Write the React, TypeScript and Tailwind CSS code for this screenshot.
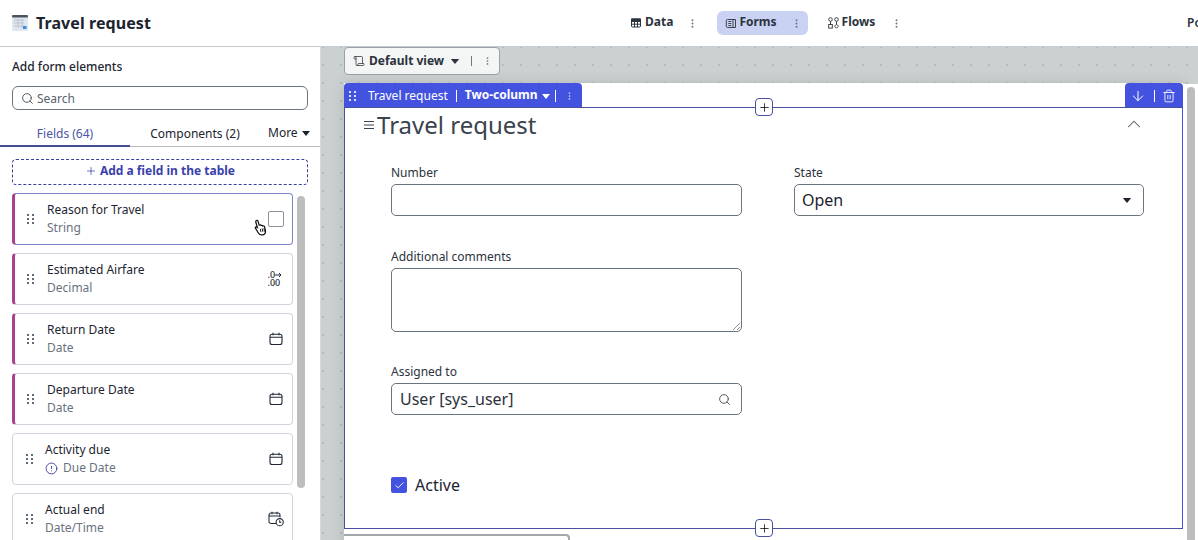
import React from "react";
import { Search, ChevronUp, ArrowDown, Trash2, Plus, Check, CircleAlert, Scroll } from "lucide-react";

const font = { fontFamily: '"Noto Sans", sans-serif' };

function Caret({ className = "" }: { className?: string }) {
  return <svg viewBox="0 0 10 6" className={className}><path d="M0 0h10L5 6z" fill="currentColor" /></svg>;
}

function Grip({ className = "" }: { className?: string }) {
  return (
    <svg viewBox="0 0 7 11" className={className} fill="currentColor">
      {[0, 4, 8].map((y) => (
        <g key={y}>
          <rect x="0" y={y} width="2" height="2" />
          <rect x="5" y={y} width="2" height="2" />
        </g>
      ))}
    </svg>
  );
}

function Kebab({ className = "" }: { className?: string }) {
  return (
    <svg viewBox="0 0 3 11" className={className} fill="currentColor">
      <circle cx="1.5" cy="1.5" r="1.2" />
      <circle cx="1.5" cy="5.5" r="1.2" />
      <circle cx="1.5" cy="9.5" r="1.2" />
    </svg>
  );
}

function TableLogo() {
  return (
    <svg viewBox="0 0 16 16" className="w-4 h-4">
      <rect x="0" y="0" width="16" height="16" rx="1.5" fill="#dfe6ee" />
      <rect x="0" y="0" width="16" height="2.500" rx="1" fill="#4a5560" />
      <path d="M2 5h10M2 8h10M2 11h10M6 4v9M10 4v9" stroke="#b3bec9" strokeWidth="0.8" />
      <rect x="11" y="11" width="3.500" height="3" fill="#3f8ee8" />
    </svg>
  );
}

function DataGlyph() {
  return (
    <svg viewBox="0 0 10 10" className="w-[10px] h-[10px]" fill="none" stroke="currentColor" strokeWidth="1">
      <rect x="0.500" y="1" width="9" height="8" rx="1" />
      <rect x="0.500" y="1" width="9" height="2.500" fill="currentColor" />
      <path d="M0.500 6.200h9M3.500 3.500v5.500M6.500 3.500v5.500" />
    </svg>
  );
}

function FormsGlyph() {
  return (
    <svg viewBox="0 0 11 11" className="w-[11px] h-[11px]" fill="none" stroke="currentColor" strokeWidth="0.9">
      <path d="M2.500 1.500H8v8H2.500a1.200 1.200 0 0 1-1.200-1.200V2.700A1.200 1.200 0 0 1 2.500 1.500z" />
      <path d="M8 1.500h2.500v8H8M3.300 3.500h3M3.300 5.500h3M3.300 7.500h3" />
    </svg>
  );
}

function FlowsGlyph() {
  return (
    <svg viewBox="0 0 11 12" className="w-[11px] h-[12px]" fill="none" stroke="currentColor" strokeWidth="0.9">
      <circle cx="2.500" cy="2.500" r="1.800" />
      <circle cx="8.500" cy="2.500" r="1.800" />
      <rect x="0.700" y="7.500" width="3.600" height="3.600" />
      <path d="M8.500 7.200l2 2-2 2-2-2z" />
      <path d="M2.500 4.500v3M8.500 4.500v2.700" />
    </svg>
  );
}

function DecimalIcon() {
  return (
    <div className="flex flex-col items-start text-[9px] leading-[8px] text-[#1f2937] w-[16px] font-medium whitespace-nowrap">
      <div className="flex items-center h-[8px]">
        <span>.0</span>
        <svg viewBox="0 0 7 6" className="w-[7px] h-[6px] shrink-0"><path d="M0 3h6M4 1l2 2-2 2" stroke="currentColor" fill="none" strokeWidth="1" /></svg>
      </div>
      <span>.00</span>
    </div>
  );
}

function CalendarGlyph() {
  return (
    <svg viewBox="0 0 14 14" className="w-[14px] h-[14px]" fill="none" stroke="#1f2937" strokeWidth="1.100">
      <rect x="1" y="2.200" width="12" height="10.300" rx="2" />
      <path d="M1 5.200h12M4 .8v2.400M10 .8v2.400" />
    </svg>
  );
}

function CalendarClockGlyph() {
  return (
    <svg viewBox="0 0 16 16" className="w-4 h-4" fill="none" stroke="#1f2937" strokeWidth="1.050">
      <path d="M8 12.500H3a2 2 0 0 1-2-2V4a2 2 0 0 1 2-2h7a2 2 0 0 1 2 2v2.500M1 5h11M4 .8v2.400M9 .8v2.400" />
      <circle cx="11.700" cy="11.200" r="3.600" />
      <path d="M11.700 9.300v2h1.600" />
    </svg>
  );
}

function Hand() {
  return (
    <svg viewBox="0 0 16 18" className="absolute left-[238px] top-[24px] w-[15px] h-[19px]">
      <path d="M3.200 1.800c.9-.8 1.900-.3 2.200.7l1.200 4 .3-.2c.8-.4 1.500-.1 1.800.5.7-.3 1.500 0 1.800.6.7-.3 1.600.1 1.800.8l.9 3.800c.4 2.200-.6 4.300-2.600 4.800-2 .5-3.800-.1-4.900-1.900L2.600 9.700c-.5-.8.1-1.600 1-1.400l1.100.6L3 3.400c-.1-.6-.1-1.200.2-1.600z" fill="#fff" stroke="#111" strokeWidth="1.300" />
      <path d="M7.800 10.500l.6 3.200M9.800 10l.6 3.500M11.700 9.800l.5 3.500" stroke="#111" strokeWidth="1" />
    </svg>
  );
}

function FieldCard({ title, sub, accent, hover, icon, alert }: { title: string; sub: string; accent?: boolean; hover?: boolean; icon?: React.ReactNode; alert?: boolean }) {
  return (
    <div className={`relative h-[52px] shrink-0 rounded-[4px] border flex items-center bg-white overflow-visible ${hover ? "border-[#7b83c4]" : "border-[#d0d5dd]"} ${accent ? "border-l-[3px] border-l-[#ad3f8f]" : ""}`}>
      <div className={`flex items-center ${accent ? "pl-[12px]" : "pl-[13px]"}`}>
        <Grip className="w-[7px] h-[11px] text-[#5f6b77]" />
      </div>
      <div className={`flex-1 ${accent ? "pl-[13px]" : "pl-[12px]"} flex flex-col`}>
        <span className="text-[12px] leading-[18px] text-[#1c2430]">{title}</span>
        <span className="text-[12px] leading-[18px] text-[#69727d] flex items-center gap-[5px]">
          {alert && <CircleAlert className="w-[13px] h-[13px] text-[#3c3f9e]" strokeWidth={1.7} />}
          {sub}
        </span>
      </div>
      <div className="w-[17px] mr-[8px] flex justify-center">{icon}</div>
      {hover && <Hand />}
    </div>
  );
}

function Label({ children }: { children: React.ReactNode }) {
  return <div className="text-[12px] leading-[16px] text-[#2b333d] mb-[3px]">{children}</div>;
}

export default function App() {
  return (
    <div style={font} className="w-[1198px] h-[540px] overflow-hidden flex flex-col bg-white">
      <header className="h-[47px] shrink-0 border-b border-[#c5cbd0] flex items-center relative bg-white">
        <div className="pl-[12px] flex items-center gap-[8px] w-[500px]">
          <TableLogo />
          <span className="text-[16px] font-bold tracking-[0.08px] text-[#1c2430]">Travel request</span>
        </div>
        <nav className="flex items-center pl-[131px] text-[12px] font-bold text-[#2b333d]">
          <div className="flex items-center h-[24px] gap-[4px]">
            <DataGlyph />
            <span className="-mt-[2px]">Data</span>
            <Kebab className="w-[3px] h-[9px] ml-[14px] text-[#6f7882]" />
          </div>
          <div className="flex items-center h-[24px] ml-[23px] pl-[8px] pr-[10px] rounded-[6px] bg-[#c9d2f3] gap-[3px]">
            <FormsGlyph />
            <span className="-mt-[2px]">Forms</span>
            <Kebab className="w-[3px] h-[9px] ml-[15px] text-[#6f7882]" />
          </div>
          <div className="flex items-center h-[24px] ml-[20px] gap-[3px]">
            <FlowsGlyph />
            <span className="-mt-[2px]">Flows</span>
            <Kebab className="w-[3px] h-[9px] ml-[17px] text-[#6f7882]" />
          </div>
        </nav>
        <span className="ml-auto text-[12px] font-semibold text-[#2b333d] -mr-[2px] w-[13px] overflow-hidden">Po</span>
      </header>

      <div className="flex-1 flex min-h-0">
        <aside className="w-[321px] shrink-0 border-r border-[#d5d9dd] bg-white flex flex-col">
          <div className="px-[12px] pt-[12px] text-[12px] leading-[16px] font-medium text-[#1c2430]">Add form elements</div>
          <div className="mx-[12px] mt-[11px] h-[24px] rounded-[6px] border border-[#6b7580] flex items-center px-[8px] gap-[3px]">
            <Search className="w-[13px] h-[13px] text-[#3b444e]" strokeWidth={1.6} />
            <span className="text-[12px] text-[#59636e] pt-[1px]">Search</span>
          </div>
          <div className="mt-[13px] h-[24px] flex border-b border-[#b5bac0] text-[12px] relative">
            <div className="w-[130px] text-center text-[#4c55a8] border-b-[2px] border-[#474e94] h-[24px] leading-[22px]">Fields (64)</div>
            <div className="w-[130px] text-center text-[#1c2430] leading-[22px]">Components (2)</div>
            <div className="flex items-center gap-[4px] text-[#1c2430] h-[20px] pl-[8px]">
              More <Caret className="w-[8px] h-[5px]" />
            </div>
          </div>
          <div className="mx-[12px] mt-[12px] h-[26px] pb-[2px] rounded-[4px] border border-dashed border-[#3c3f9e] flex items-center justify-center gap-[3px] text-[12px] font-bold text-[#3a41ad]">
            <Plus className="w-[12px] h-[12px]" strokeWidth={1.5} />
            Add a field in the table
          </div>
          <div className="flex-1 min-h-0 flex mt-[8px] overflow-hidden">
            <div className="ml-[12px] w-[281px] flex flex-col gap-[8px]">
              <FieldCard title="Reason for Travel" sub="String" accent hover icon={<div className="w-[16px] h-[16px] shrink-0 rounded-[2px] border border-[#8a929b]" />} />
              <FieldCard title="Estimated Airfare" sub="Decimal" accent icon={<DecimalIcon />} />
              <FieldCard title="Return Date" sub="Date" accent icon={<CalendarGlyph />} />
              <FieldCard title="Departure Date" sub="Date" accent icon={<CalendarGlyph />} />
              <FieldCard title="Activity due" sub="Due Date" alert icon={<CalendarGlyph />} />
              <FieldCard title="Actual end" sub="Date/Time" icon={<CalendarClockGlyph />} />
            </div>
            <div className="ml-[4px] mt-[3px] w-[8px] h-[292px] bg-[#bdbdbd] rounded-full" />
          </div>
        </aside>

        <main className="flex-1 min-w-0 bg-[#cbd1d1] bg-[radial-gradient(circle,#b6bcbd_1px,transparent_1.2px)] bg-[length:18px_18px] bg-[position:11px_9px] flex overflow-hidden">
          <div className="w-[862px] shrink-0 pl-[23px] flex flex-col">
            <div className="h-[28px] w-[156px] shrink-0 rounded-[4px] border border-[#9aa1a8] bg-[#f4f5f5] flex items-center pl-[8px] gap-[4px] text-[12px] font-bold text-[#2b333d]">
              <Scroll className="w-[12px] h-[12px]" strokeWidth={1.5} />
              <span>Default view</span>
              <Caret className="w-[10px] h-[5px] ml-[2px]" />
              <span className="w-px h-[10px] bg-[#6f7882] ml-[7px]" />
              <Kebab className="w-[3px] h-[8px] ml-[10px] text-[#6f7882]" />
            </div>
            <div className="mt-[8px] flex-1 bg-white shadow-[0_0_14px_rgba(0,0,0,0.12)] flex flex-col">
              <div className="flex justify-between h-[24px] shrink-0 bg-white">
                <div className="w-[238px] rounded-t-[4px] bg-[#4353e0] flex items-center text-white text-[12px] pl-[5px] pt-[2px]">
                  <Grip className="w-[7px] h-[11px] text-[#dfe3ff]" />
                  <span className="ml-[12px]">Travel request</span>
                  <span className="w-px h-[12px] bg-white mx-[8px]" />
                  <span className="font-bold -mt-[2px]">Two-column</span>
                  <Caret className="w-[8px] h-[5px] ml-[4px]" />
                  <span className="w-px h-[12px] bg-white ml-[5px]" />
                  <Kebab className="w-[3px] h-[8px] ml-[12px] text-[#c9ceff]" />
                </div>
                <div className="w-[58px] rounded-t-[4px] bg-[#4353e0] flex items-center text-white pl-[5px] pt-[2px]">
                  <ArrowDown className="w-[16px] h-[16px]" strokeWidth={1.500} />
                  <span className="w-px h-[12px] bg-white ml-[8px]" />
                  <Trash2 className="w-[14px] h-[14px] ml-[7px]" strokeWidth={1.500} />
                </div>
              </div>
              <div className="relative h-[422px] shrink-0 bg-white border border-[#4a50a0] border-r-[#4353e0]">
                <div className="absolute left-[410px] -top-[10px] w-[18px] h-[18px] rounded-[4px] bg-white border border-[#4a50a0] flex items-center justify-center">
                  <Plus className="w-[13px] h-[13px] text-black" strokeWidth={1.400} />
                </div>
                <div className="absolute left-[410px] -bottom-[9px] w-[18px] h-[18px] rounded-[4px] bg-white border border-[#4a50a0] flex items-center justify-center">
                  <Plus className="w-[13px] h-[13px] text-black" strokeWidth={1.400} />
                </div>
                <div className="flex items-center h-[34px] pl-[19px] pr-[37px]">
                  <svg viewBox="0 0 10 8" className="w-[10px] h-[8px]" stroke="#3b444e" strokeWidth="1"><path d="M0 .5h10M0 4h10M0 7.500h10" /></svg>
                  <span className="ml-[3px] text-[24px] leading-[34px] text-[#3a434e]">Travel request</span>
                  <ChevronUp className="ml-auto -mt-[2px] w-[22px] h-[22px] text-[#4a535e]" strokeWidth={1.100} />
                </div>
                <div className="grid grid-cols-[351px_350px] gap-x-[52px] pl-[46px] pt-[23px]">
                  <div>
                    <Label>Number</Label>
                    <div className="h-[32px] rounded-[5px] border border-[#6b7580]" />
                  </div>
                  <div>
                    <Label>State</Label>
                    <div className="h-[32px] rounded-[5px] border border-[#6b7580] flex items-center pl-[7px] pr-[11px] text-[16px] text-[#1c2430] justify-between">
                      Open
                      <Caret className="w-[10px] h-[5px] text-[#1c2430]" />
                    </div>
                  </div>
                  <div className="mt-[33px]">
                    <Label>Additional comments</Label>
                    <div className="relative h-[64px] rounded-[5px] border border-[#6b7580]">
                      <svg viewBox="0 0 8 8" className="absolute right-[1px] bottom-[1px] w-[8px] h-[8px]" stroke="#6b7580" strokeWidth="0.800"><path d="M1 8l7-7M5 8l3-3" /></svg>
                    </div>
                  </div>
                  <div />
                  <div className="mt-[32px]">
                    <Label>Assigned to</Label>
                    <div className="h-[32px] rounded-[5px] border border-[#6b7580] flex items-center px-[8px] text-[16px] text-[#2b333d] justify-between">
                      User [sys_user]
                      <Search className="w-[13px] h-[13px] text-[#3b444e] mr-[2px]" strokeWidth={1.600} />
                    </div>
                  </div>
                  <div />
                  <div className="mt-[62px] flex items-center h-[16px] gap-[8px]">
                    <div className="w-[16px] h-[16px] rounded-[2px] bg-[#4353e0] flex items-center justify-center">
                      <Check className="w-[11px] h-[11px] text-white" strokeWidth={2} />
                    </div>
                    <span className="text-[16px] text-[#1c2430]">Active</span>
                  </div>
                </div>
              </div>
              <div className="mt-[5px] w-[226px] h-[20px] bg-white border-t-2 border-r-2 border-[#a5a8aa] rounded-tr-[4px]" />
            </div>
          </div>
          <div className="mt-[37px] flex-1 bg-white pt-[3px] pl-[4px]">
            <div className="w-[8px] h-[480px] bg-[#bdbdbd] rounded-t-full" />
          </div>
        </main>
      </div>
    </div>
  );
}
